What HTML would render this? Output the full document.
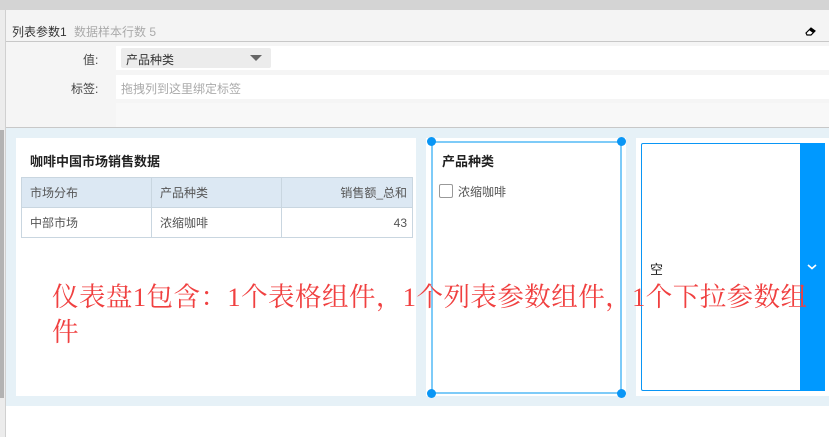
<!DOCTYPE html>
<html><head><meta charset="utf-8"><style>
*{margin:0;padding:0;box-sizing:border-box}
body{width:829px;height:437px;position:relative;overflow:hidden;background:#fff;font-family:"Liberation Sans","Noto Sans CJK SC",sans-serif;font-size:12px;color:#333}
.a{position:absolute}
</style></head><body>
<div class="a" style="left:0;top:0;width:829px;height:10px;background:#d4d4d4"></div>
<div class="a" style="left:0;top:10px;width:5px;height:427px;background:#ececec"></div>
<div class="a" style="left:0;top:130px;width:4px;height:268px;background:#b3b3b3"></div>
<div class="a" style="left:5px;top:10px;width:1px;height:427px;background:#d0d0d0"></div>
<div class="a" style="left:6px;top:10px;width:823px;height:31px;background:#f4f4f4"></div>
<div class="a" style="left:12px;top:23px;font-size:12px;color:#333">列表参数1 <span style="color:#aaa;margin-left:4px">数据样本行数 5</span></div>
<svg class="a" style="left:804px;top:25px" width="14" height="12" viewBox="0 0 14 12"><path d="M2 8 L7 3 L11 6 L7 10 H3 Z" fill="#fff" stroke="#000" stroke-width="1.2"/><path d="M7 3 L11 6 L9 8 L5 5Z" fill="#000"/></svg>
<div class="a" style="left:6px;top:41px;width:823px;height:1px;background:#c8c8c8"></div>
<div class="a" style="left:6px;top:42px;width:823px;height:86px;background:#f5f5f5"></div>
<div class="a" style="left:116px;top:46px;width:713px;height:24px;background:#fff"></div>
<div class="a" style="left:121px;top:48px;width:150px;height:20px;background:#ececec;border-radius:2px"></div>
<div class="a" style="left:126px;top:51px;color:#333">产品种类</div>
<div class="a" style="left:250px;top:55px;width:0;height:0;border-left:6px solid transparent;border-right:6px solid transparent;border-top:6px solid #666"></div>
<div class="a" style="left:83px;top:51px;color:#444">值:</div>
<div class="a" style="left:116px;top:75px;width:713px;height:24px;background:#fff"></div>
<div class="a" style="left:71px;top:80px;color:#444">标签:</div>
<div class="a" style="left:121px;top:80px;color:#aaa">拖拽列到这里绑定标签</div>
<div class="a" style="left:116px;top:103px;width:713px;height:24px;background:#f8f8f8"></div>
<div class="a" style="left:6px;top:127px;width:823px;height:1px;background:#c8c8c8"></div>
<div class="a" style="left:6px;top:128px;width:823px;height:278px;background:#e6f1f7"></div>
<div class="a" style="left:16px;top:138px;width:400px;height:258px;background:#fff"></div>
<div class="a" style="left:30px;top:151px;font-size:13px;font-weight:bold;color:#222">咖啡中国市场销售数据</div>
<table class="a" style="left:21px;top:177px;width:392px;border-collapse:collapse;font-size:12px;color:#555">
<tr style="background:#dce8f3;height:30px"><td style="border:1px solid #c9d6e0;padding-left:8px;width:130px">市场分布</td><td style="border:1px solid #c9d6e0;padding-left:8px;width:130px">产品种类</td><td style="border:1px solid #c9d6e0;text-align:right;padding-right:5px">销售额_总和</td></tr>
<tr style="height:30px"><td style="border:1px solid #c9d6e0;padding-left:8px">中部市场</td><td style="border:1px solid #c9d6e0;padding-left:8px">浓缩咖啡</td><td style="border:1px solid #c9d6e0;text-align:right;padding-right:5px">43</td></tr>
</table>
<div class="a" style="left:426px;top:138px;width:200px;height:258px;background:#fff"></div>
<div class="a" style="left:431px;top:141px;width:191px;height:253px;border:2px solid #7ecbf8"></div>
<div class="a" style="left:427px;top:137px;width:9px;height:9px;border-radius:50%;background:#0a96f5"></div>
<div class="a" style="left:617px;top:137px;width:9px;height:9px;border-radius:50%;background:#0a96f5"></div>
<div class="a" style="left:427px;top:389px;width:9px;height:9px;border-radius:50%;background:#0a96f5"></div>
<div class="a" style="left:617px;top:389px;width:9px;height:9px;border-radius:50%;background:#0a96f5"></div>
<div class="a" style="left:442px;top:151px;font-size:13px;font-weight:bold;color:#222">产品种类</div>
<div class="a" style="left:439px;top:184px;width:14px;height:14px;border:1px solid #999;border-radius:2px"></div>
<div class="a" style="left:458px;top:183px;color:#555">浓缩咖啡</div>
<div class="a" style="left:636px;top:138px;width:193px;height:258px;background:#fff"></div>
<div class="a" style="left:641px;top:143px;width:184px;height:248px;border:1px solid #0a96f5;border-radius:2px"></div>
<div class="a" style="left:800px;top:143px;width:25px;height:248px;background:#0099ff"></div>
<svg class="a" style="left:806px;top:263px" width="12" height="8" viewBox="0 0 12 8"><path d="M2 2 L6 5.5 L10 2" fill="none" stroke="#fff" stroke-width="1.6"/></svg>
<div class="a" style="left:650px;top:259px;font-size:13px;color:#222">空</div>
<div class="a" style="left:52px;top:280px;width:770px;font-family:'Liberation Serif','Noto Serif CJK SC',serif;font-size:26.5px;line-height:35px;letter-spacing:0.45px;color:#f04040">仪表盘1包含：1个表格组件，1个列表参数组件，1个下拉参数组件</div>
</body></html>
